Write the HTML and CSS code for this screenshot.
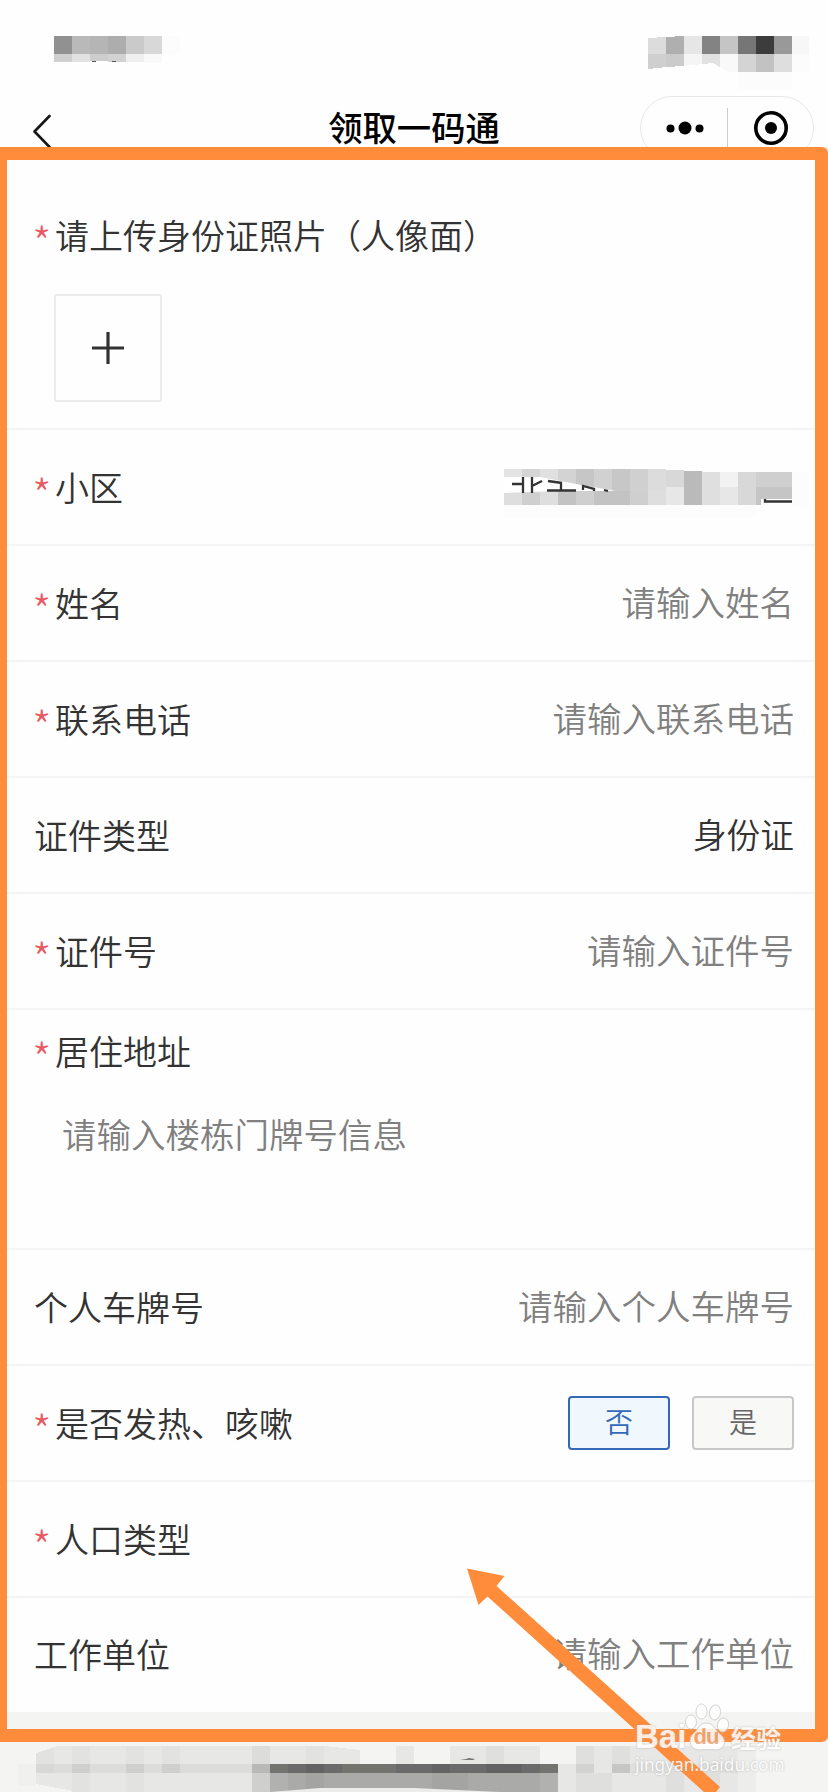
FILE: index.html
```
<!DOCTYPE html>
<html lang="zh-CN">
<head>
<meta charset="utf-8">
<title>领取一码通</title>
<link rel="stylesheet" href="styles.css">
</head>
<body>
<div class="screen">
  <header class="top">
    <div class="status">
      <svg class="mosaic-left" width="126" height="30" viewBox="0 0 126 30" shape-rendering="crispEdges">
        <path fill="#919191" d="M0 0h18v18H0z"/><path fill="#b9b9b9" d="M18 0h18v18H18z"/><path fill="#b5b5b5" d="M36 0h18v18H36z"/><path fill="#adadad" d="M54 0h18v18H54z"/><path fill="#cacaca" d="M72 0h18v18H72z"/><path fill="#d8d8d8" d="M90 0h18v18H90z"/><path fill="#fcfcfc" d="M108 0h18v18h-18z"/>
        <path fill="#cfcfcf" d="M0 18h18v8H0z"/><path fill="#e1e1e1" d="M18 18h18v8H18z"/><path fill="#cdcdcd" d="M36 18h18v7H36z"/><path fill="#d2d2d2" d="M54 18h18v8H54z"/><path fill="#efefef" d="M72 18h18v8H72z"/><path fill="#f9f9f9" d="M90 18h18v9H90z"/>
        <path fill="#555" d="M38 25h4v1h-4zM58 25h4v1h-4z"/>
      </svg>
      <svg class="mosaic-right" width="180" height="60" viewBox="0 0 180 60" shape-rendering="crispEdges">
        <path fill="#dcdcdc" d="M0 2l18-1v17H0z"/><path fill="#afafaf" d="M18 1l18-1v18H18z"/><path fill="#e6e6e6" d="M36 0h18v18H36z"/><path fill="#838383" d="M54 0h18v18H54z"/><path fill="#c5c5c5" d="M72 0h18v18H72z"/><path fill="#767676" d="M90 0h18v18H90z"/><path fill="#3c3c3c" d="M108 0h18v18h-18z"/><path fill="#999" d="M126 0h18v18h-18z"/><path fill="#f7f7f7" d="M144 0h17v18h-17z"/>
        <path fill="#cfcfcf" d="M0 18h18v13L0 33z"/><path fill="#cbcbcb" d="M18 18h18v12l-18 1z"/><path fill="#f5f5f5" d="M36 18h18v10l-18 2z"/><path fill="#e1e1e1" d="M54 18h18v13l-7-4-11 1z"/><path fill="#f9f9f9" d="M72 18h18v18h-9l-9-5z"/><path fill="#d4d4d4" d="M90 18h18v18H90z"/><path fill="#c2c2c2" d="M108 18h18v18h-18z"/><path fill="#dedede" d="M126 18h18v18h-18z"/><path fill="#fcfcfc" d="M144 18h17v18h-17zM90 36h54v17H90z"/>
      </svg>
    </div>
    <nav class="nav">
      <svg class="back" width="20" height="36" viewBox="0 0 20 36"><path d="M17.500 2L2.500 17.500L17.500 33" fill="none" stroke="#161616" stroke-width="2.600" stroke-linecap="round" stroke-linejoin="round"/></svg>
      <h1 class="title">领取一码通</h1>
      <div class="capsule">
        <svg class="more" width="38" height="14" viewBox="0 0 38 14"><circle cx="4.500" cy="7.500" r="4"/><circle cx="19" cy="7" r="6.500"/><circle cx="33.500" cy="7.500" r="4"/></svg>
        <span class="divider"></span>
        <svg class="target" width="36" height="36" viewBox="0 0 36 36"><circle cx="18" cy="18" r="15.200" fill="none" stroke="#000" stroke-width="3.600"/><circle cx="18" cy="18" r="6"/></svg>
      </div>
    </nav>
  </header>

  <main class="frame">
    <section class="upload">
      <div class="label"><i class="star">*</i>请上传身份证照片（人像面）</div>
      <div class="picker"><svg width="32" height="32" viewBox="0 0 32 32"><path d="M0 16h32M16 0v32" stroke="#333" stroke-width="3.200"/></svg></div>
    </section>
    <div class="row"><div class="label"><i class="star">*</i>小区</div>
      <svg class="mosaic-value" width="306" height="52" viewBox="0 0 306 52">
        <g shape-rendering="crispEdges">
        <path fill="#e4e4e4" d="M0 0h18v36H0z"/><path fill="#d5d5d5" d="M18 0h18v36H18z"/><path fill="#e0e0e0" d="M36 0h18v36H36z"/><path fill="#d3d3d3" d="M54 0h18v36H54z"/><path fill="#c6c6c6" d="M72 0h18v36H72z"/><path fill="#d1d1d1" d="M90 0h18v36H90z"/><path fill="#c7c7c7" d="M108 0h18v36h-18z"/><path fill="#d0d0d0" d="M126 0h18v36h-18z"/><path fill="#dcdcdc" d="M144 0h18v36h-18z"/><path fill="#d8d8d8" d="M162 1h18v17h-18z"/><path fill="#bababa" d="M180 2h18v34h-18z"/><path fill="#dfdfdf" d="M198 3h18v33h-18z"/><path fill="#f2f2f2" d="M216 3h18v15h-18z"/><path fill="#d8d8d8" d="M234 3h18v33h-18z"/><path fill="#cfcfcf" d="M252 3h36v15h-36z"/><path fill="#fcfcfc" d="M288 3h17v33h-17zM0 36h252v12H0z"/>
        <path fill="#dedede" d="M0 24h18v12H0zM36 24h18v12H36zM144 22h18v14h-18z"/><path fill="#cfcfcf" d="M18 24h18v12H18zM72 22h36v14H72zM126 22h18v14h-18z"/><path fill="#c3c3c3" d="M54 23h18v13H54zM90 22h36v14H90z"/><path fill="#e7e7e7" d="M162 18h18v18h-18zM216 18h18v18h-18z"/><path fill="#c5c5c5" d="M252 18h18v18h-18zM270 18h18v18h-18z"/>
        </g>
        <path fill="#fff" d="M0 8L36 8L72 15L112 22L54 22L0 24zM257 30h31v6h-31z"/>
        <path fill="none" stroke="#333" stroke-width="2.300" d="M19 8v16M8 15h11M28 8v16M28 17l10-5M44 12l14 2M57 13v8M43 21.500h29M79 21v-4l11 3v2M100 21l4 1M261 30v2.500h27"/>
      </svg>
    </div>
    <div class="row"><div class="label"><i class="star">*</i>姓名</div><div class="hint">请输入姓名</div></div>
    <div class="row"><div class="label"><i class="star">*</i>联系电话</div><div class="hint">请输入联系电话</div></div>
    <div class="row"><div class="label">证件类型</div><div class="value">身份证</div></div>
    <div class="row"><div class="label"><i class="star">*</i>证件号</div><div class="hint">请输入证件号</div></div>
    <section class="address">
      <div class="label"><i class="star">*</i>居住地址</div>
      <div class="hint">请输入楼栋门牌号信息</div>
    </section>
    <div class="row"><div class="label">个人车牌号</div><div class="hint">请输入个人车牌号</div></div>
    <div class="row"><div class="label"><i class="star">*</i>是否发热、咳嗽</div>
      <div class="choices"><button class="choice selected">否</button><button class="choice">是</button></div>
    </div>
    <div class="row"><div class="label"><i class="star">*</i>人口类型</div></div>
    <div class="row last"><div class="label">工作单位</div><div class="hint">请输入工作单位</div></div>
  </main>

  <footer class="bottom">
    <svg width="828" height="50" viewBox="0 0 828 50">
      <path fill="#f0f0ef" d="M18 22h18v22H18z"/>
      <g shape-rendering="crispEdges">
      <path fill="#e7e7e6" d="M36 11L58 4H324L360 8V50H78L36 42z"/>
      <path fill="#e2e2e0" d="M36 11l18-6v17H36zM72 4h18v18H72zM126 4h18v18h-18zM162 4h18v18h-18zM306 4h18v18h-18zM72 31h18v19H72zM126 31h18v19h-18z"/>
      <path fill="#dcdcdb" d="M252 4h18v18h-18zM54 22h198v9H54z"/>
      <path fill="#cfcfce" d="M72 22h18v9H72zM126 22h18v9h-18zM162 22h18v9h-18zM252 31h18v19h-18z"/>
      <path fill="#d8d8d6" d="M36 22h18v9H36z"/><path fill="#b9b9b7" d="M252 22h18v9h-18z"/>
      <path fill="#e7e7e6" d="M396 4h18v18h-18zM450 4h36v18h-36zM504 4h36v18h-36zM558 22h198v28H558zM594 4h162v18H594z"/>
      <path fill="#dfdfde" d="M486 4h18v18h-18zM576 4h18v18h-18zM612 4h18v18h-18zM576 31h36v19h-36zM630 22h108v9H630zM666 31h18v19h-18zM702 31h18v19h-18z"/>
      <path fill="#d2d2d0" d="M576 22h18v9h-18z"/><path fill="#c6c6c6" d="M612 22h18v9h-18z"/>
      <path fill="#ededec" d="M738 4h18v46h-18z"/>
      <path fill="#6b6b6b" d="M270 22h288v9H270z"/><path fill="#737370" d="M270 22h18v9h-18zM342 22h54v9h-54zM540 22h18v9h-18z"/><path fill="#636363" d="M306 22h18v9h-18zM432 22h18v9h-18zM486 22h36v9h-36z"/>
      <path fill="#aaaaa9" d="M270 31h288v19H270z"/><path fill="#a4a4a3" d="M306 31h18v19h-18zM432 31h36v19h-36z"/><path fill="#b1b1af" d="M270 31h18v19h-18zM540 31h18v19h-18z"/>
      </g>
      <path fill="#ececeb" d="M270 50L320 46H414L500 50z"/>
      <path fill="#777" d="M460 18l6-1 3-1 6 1-2 1z"/>
    </svg>
  </footer>

  <svg class="arrow" width="828" height="1792" viewBox="0 0 828 1792"><path fill="#ff8c3a" d="M467 1568.500L504.500 1576L496.500 1586L720 1787L716 1792H704L487.500 1596.500L478.500 1605z"/></svg>

  <div class="watermark">
    <svg class="paw" width="44" height="48" viewBox="0 0 44 48"><g fill="#fff" stroke="#cfcfcf" stroke-width="1"><ellipse cx="6" cy="19" rx="5.500" ry="7"/><ellipse cx="16.500" cy="8.500" rx="5.500" ry="7.500"/><ellipse cx="30" cy="9.500" rx="5.500" ry="7.500" transform="rotate(10 30 9.500)"/><ellipse cx="38" cy="22" rx="5.500" ry="7" transform="rotate(12 38 22)"/><path d="M21 20C14 20 13 27 8 31C3 35 4 46 13 47C18 47 26 46 31 47C40 47 42 37 36 32C30 28 30 20 21 20z"/></g></svg>
    <div class="brand"><span class="bai">Bai</span><span class="du">du</span><span class="jy">经验</span></div>
    <div class="site">jingyan.baidu.com</div>
  </div>
</div>
</body>
</html>
```
FILE: styles.css
```
* { box-sizing: border-box; }
body { margin: 0; background: #fff; font-family: "Noto Sans CJK SC", sans-serif; }
.screen { position: relative; width: 828px; height: 1792px; overflow: hidden; background: #f4f4f2; display: flex; flex-direction: column; }
.top { height: 147px; flex: none; overflow: hidden; background: #fefefe; }
.status { height: 96px; padding: 36px 0 0 54px; display: flex; justify-content: space-between; }
.mosaic-right { flex: none; }
.nav { height: 64px; display: grid; grid-template-columns: 240px 1fr 240px; align-items: center; padding-right: 14px; }
.back { margin: 8px 0 0 32px; }
.title { margin: 0; padding: 0 0 5px 14px; text-align: center; font-size: 34.300px; line-height: 36px; font-weight: 500; color: #000; }
.capsule { justify-self: end; width: 174px; height: 64px; border: 1.500px solid #e8e8e8; border-radius: 32px; display: flex; align-items: center; padding-left: 25px; }
.divider { width: 1px; height: 40px; margin: 0 25px 0 23px; background: #ccc; }
.frame { flex: none; height: 1595px; border: 13px solid #ff8c3a; border-left-width: 7px; border-radius: 0 6px 6px 0; overflow: hidden; background: #f4f4f2; display: flex; flex-direction: column; }
.upload { height: 270px; flex: none; background: #fefefe; border-bottom: 2px solid #f4f4f4; padding: 50px 27px 0; }
.label { font-size: 34px; line-height: 50px; color: #333; font-weight: 350; white-space: nowrap; display: flex; }
.star { width: 21px; flex: none; font-style: normal; font-weight: 300; font-size: 44px; line-height: 63px; height: 50px; margin-left: -2px; margin-right: 2px; color: #e65a60; }
.picker { width: 108px; height: 108px; margin: 34px 0 0 20px; border: 2px solid #ececec; border-radius: 2px; display: flex; align-items: center; justify-content: center; }
.row { height: 116px; flex: none; background: #fefefe; border-bottom: 2px solid #f4f4f4; padding: 0 21px 0 27px; display: flex; align-items: center; justify-content: space-between; }
.last { height: 114px; border-bottom: 0; padding-bottom: 2px; }
.hint, .value { font-size: 34.500px; line-height: 50px; padding-bottom: 4px; color: #808080; font-weight: 350; white-space: nowrap; }
.value { color: #333; font-size: 33.700px; padding-bottom: 2px; }
.mosaic-value { margin: 15px -16px 0 0; }
.address { height: 240px; flex: none; background: #fefefe; border-bottom: 2px solid #f4f4f4; padding: 16px 27px; }
.address .hint { margin: 32px 0 0 28px; }
.choices { display: flex; gap: 22px; }
.choice { width: 102px; height: 54px; padding: 0 0 4px; border: 2px solid #c8c8c8; border-radius: 4px; background: #f8f8f7; color: #666; font: 350 28px/46px "Noto Sans CJK SC", sans-serif; }
.selected { border-color: #3468b8; background: #f0f8fe; color: #3468b8; }
.bottom { height: 50px; flex: none; }
.bottom svg { display: block; }
.arrow { position: absolute; left: 0; top: 0; }
.watermark { position: absolute; left: 635px; top: 1703px; width: 150px; height: 76px; opacity: .85; color: #fff; font-family: "Liberation Sans", "Noto Sans CJK SC", sans-serif; text-shadow: 0 0 2px #aaa; }
.paw { position: absolute; left: 50px; top: 0; }
.brand { display: flex; align-items: center; height: 32px; margin-top: 18px; font-weight: 700; }
.bai { width: 54px; font-size: 33px; }
.du { position: relative; width: 34px; margin-right: 8px; font-size: 22px; color: #e9a779; text-shadow: none; text-align: center; letter-spacing: -1px; }
.jy { font-family: "Noto Sans CJK SC", sans-serif; font-size: 25px; white-space: nowrap; }
.site { font-family: "Noto Sans", sans-serif; font-size: 17.300px; line-height: 22px; margin-top: 1px; white-space: nowrap; }
```
